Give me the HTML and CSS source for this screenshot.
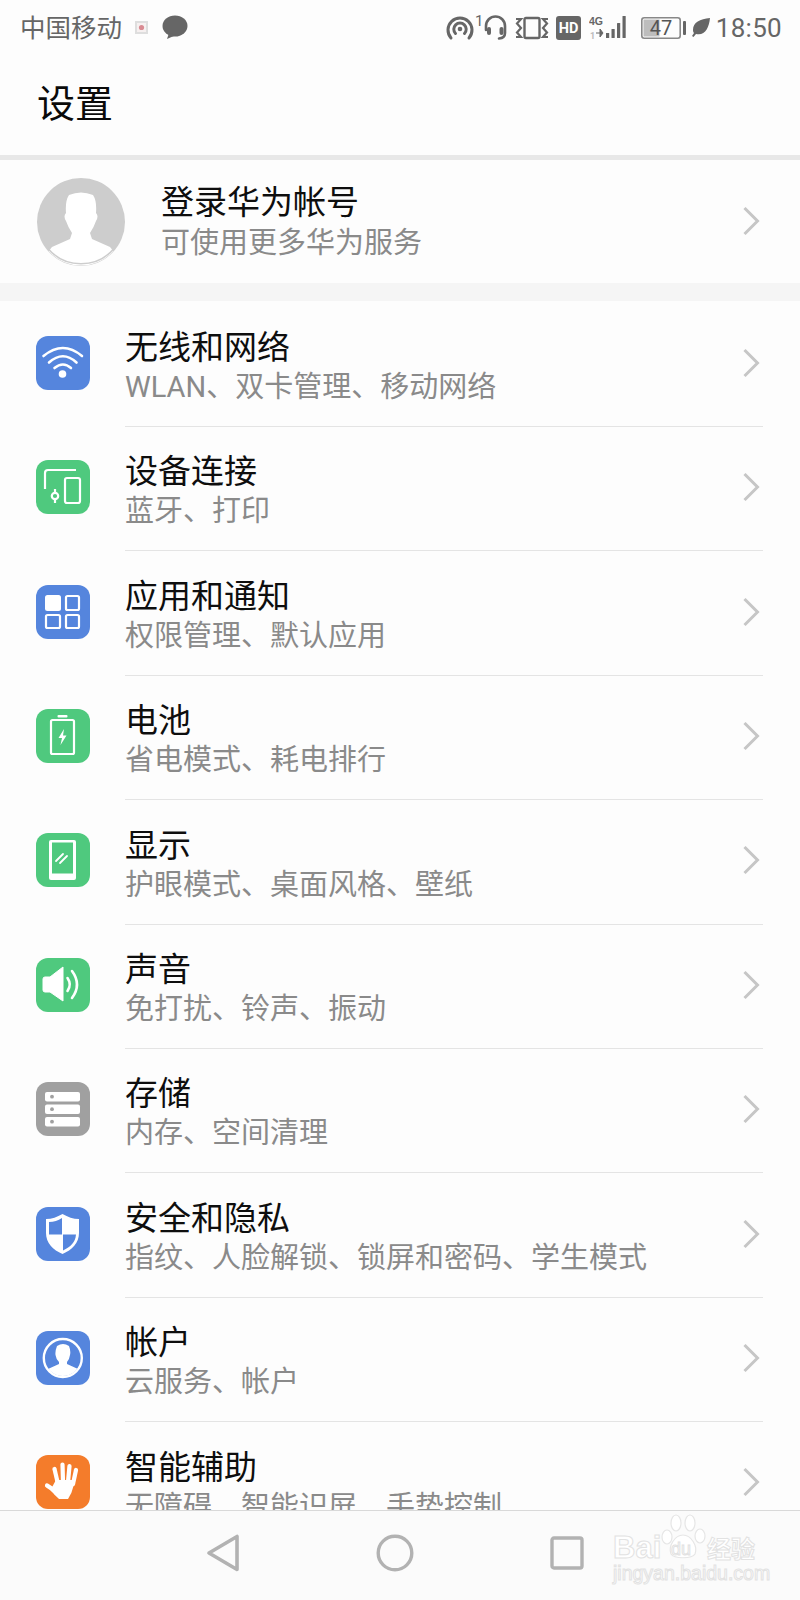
FILE: index.html
```html
<!DOCTYPE html>
<html lang="zh-CN">
<head>
<meta charset="utf-8">
<title>设置</title>
<link rel="stylesheet" href="styles.css">
</head>
<body>
<div class="phone">
  <div class="status">
    <div class="status-left">
      <span class="carrier">中国移动</span>
      <svg class="s-thumb" width="13" height="13" viewBox="0 0 13 13"><rect width="13" height="13" fill="#dedede"/><rect x="2" y="2" width="9" height="9" fill="#f6f0f0"/><circle cx="6.5" cy="6.5" r="2.6" fill="#d98a92"/></svg>
      <svg class="s-bubble" width="26" height="25" viewBox="0 0 26 25"><ellipse cx="13" cy="11" rx="12.5" ry="10.5" fill="#666"/><path d="M7 18 L5 24 L14 20 Z" fill="#666"/></svg>
    </div>
    <div class="status-right">
      <svg width="37" height="26" viewBox="0 0 37 26"><g fill="none" stroke="#666" stroke-width="3" stroke-linecap="round"><path d="M5 23 A12 12 0 1 1 23 23"/><path d="M9.500 18.500 A6.200 6.200 0 1 1 18.500 18.500"/></g><circle cx="14" cy="14" r="2.300" fill="#666"/><text x="29" y="11" class="s-one">1</text></svg>
      <svg class="s-head" width="23" height="25" viewBox="0 0 23 25"><g fill="none" stroke="#666" stroke-width="2.600" stroke-linecap="round"><path d="M2 15 V11 A9.500 9.500 0 0 1 21 11 V18 Q21 23 15 23.500"/></g><rect x="3" y="12" width="4" height="8" rx="2" fill="#666"/><rect x="15.500" y="12" width="4" height="8" rx="2" fill="#666"/></svg>
      <svg class="s-vib" width="34" height="24" viewBox="0 0 34 24"><rect x="9.500" y="2" width="15" height="20" rx="1.500" fill="none" stroke="#666" stroke-width="2.400"/><g fill="none" stroke="#666" stroke-width="2.200"><path d="M1 3 L6 3 L2 7.500 L6 12 L2 16.500 L6 21 L1 21"/><path d="M33 3 L28 3 L32 7.500 L28 12 L32 16.500 L28 21 L33 21"/></g></svg>
      <svg class="s-hd" width="25" height="24" viewBox="0 0 25 24"><rect width="25" height="24" rx="3" fill="#666"/><text x="12.500" y="17" class="s-hdt">HD</text></svg>
      <svg class="s-sig" width="41" height="25" viewBox="0 0 41 25"><text x="0" y="10" class="s-4g">4G</text><text x="1" y="23.500" class="s-sim">1</text><path d="M7 18 H11 M11 14 L14 18 L11 22 Z" stroke="#666" stroke-width="1" fill="#666"/><rect x="17" y="18" width="3.200" height="5" fill="#666"/><rect x="22.500" y="14" width="3.200" height="9" rx=".6" fill="#666"/><rect x="28" y="8" width="3.200" height="15" rx=".6" fill="#666"/><rect x="33.500" y="1" width="3.200" height="22" rx=".6" fill="#666"/></svg>
      <svg class="s-bat" width="45" height="22" viewBox="0 0 45 22"><rect x=".8" y=".8" width="38.400" height="20.400" rx="2.500" fill="#fdfdfd" stroke="#888" stroke-width="1.600"/><rect x="2.500" y="2.500" width="16" height="17" fill="#bdbdbd"/><rect x="42" y="4" width="3" height="14" rx="1" fill="#666"/><text x="20" y="18" class="s-batt">47</text></svg>
      <svg class="s-leaf" width="18" height="19" viewBox="0 0 18 19"><path d="M18 0 C8 1 1 4 1 12 C1 13.500 1.500 14.500 2 15 L0 18 L1.500 19 L4 16 C13 18 17 10 18 0 Z" fill="#666"/></svg>
      <span class="time">18:50</span>
    </div>
  </div>

  <header class="title-bar"><h1 class="title">设置</h1></header>

  <section class="profile">
    <svg class="avatar" width="90" height="90" viewBox="0 0 90 90">
      <defs><clipPath id="av"><circle cx="45" cy="45" r="43.500"/></clipPath></defs>
      <circle cx="45" cy="45" r="44" fill="#cdcdcd"/>
      <path clip-path="url(#av)" d="M33 18 Q45 13 57 18 Q61 24 60 36 Q63 39 60 44 Q58 50 54 56 L56 62 L74 70 L90 90 H0 L16 70 L34 62 L36 56 Q32 50 30 44 Q27 39 30 36 Q29 24 33 18 Z" fill="#fff"/>
      <path d="M11.500 71 A43.500 43.500 0 0 0 78.500 71" fill="none" stroke="#cdcdcd" stroke-width="1.500"/>
    </svg>
    <div class="profile-text">
      <div class="row-title">登录华为帐号</div>
      <div class="row-sub">可使用更多华为服务</div>
    </div>
    <svg class="chev" width="18" height="30" viewBox="0 0 18 30"><path d="M2.500 2 L15.500 15 L2.500 28" fill="none" stroke="#c6c6c6" stroke-width="3"/></svg>
  </section>

  <main class="list">
    <div class="row">
      <svg class="ico" width="54" height="54" viewBox="0 0 54 54"><rect width="54" height="54" rx="12" fill="#5585dd"/><g fill="none" stroke="#fff" stroke-width="2.600" stroke-linecap="round"><path d="M7.500 20 Q27 4 46 20"/><path d="M13 26.500 Q27 14 40.500 26.500"/><path d="M18.500 32 Q27 25 35 32"/></g><circle cx="26.500" cy="38" r="3.800" fill="#fff"/></svg>
      <div class="body"><div class="text"><div class="row-title">无线和网络</div><div class="row-sub">WLAN、双卡管理、移动网络</div></div><svg class="chev" width="18" height="30" viewBox="0 0 18 30"><path d="M2.500 2 L15.500 15 L2.500 28" fill="none" stroke="#c6c6c6" stroke-width="3"/></svg></div>
    </div>
    <div class="row">
      <svg class="ico" width="54" height="54" viewBox="0 0 54 54"><rect width="54" height="54" rx="12" fill="#4fc97e"/><g fill="none" stroke="#fff" stroke-width="2.200"><path d="M9 29 V13 A3 3 0 0 1 12 10 H40"/><rect x="29" y="18" width="15" height="25" rx="2"/><circle cx="19" cy="36" r="3.200"/><path d="M19 29 V32.500 M19 39.500 V43"/></g></svg>
      <div class="body"><div class="text"><div class="row-title">设备连接</div><div class="row-sub">蓝牙、打印</div></div><svg class="chev" width="18" height="30" viewBox="0 0 18 30"><path d="M2.500 2 L15.500 15 L2.500 28" fill="none" stroke="#c6c6c6" stroke-width="3"/></svg></div>
    </div>
    <div class="row">
      <svg class="ico" width="54" height="54" viewBox="0 0 54 54"><rect width="54" height="54" rx="12" fill="#5585dd"/><rect x="9" y="10" width="16" height="16" rx="2.500" fill="#fff"/><g fill="none" stroke="#fff" stroke-width="2.200"><rect x="30" y="11" width="13" height="14" rx="1.500"/><rect x="10" y="30" width="14" height="13" rx="1.500"/><rect x="30" y="30" width="13" height="13" rx="1.500"/></g></svg>
      <div class="body"><div class="text"><div class="row-title">应用和通知</div><div class="row-sub">权限管理、默认应用</div></div><svg class="chev" width="18" height="30" viewBox="0 0 18 30"><path d="M2.500 2 L15.500 15 L2.500 28" fill="none" stroke="#c6c6c6" stroke-width="3"/></svg></div>
    </div>
    <div class="row">
      <svg class="ico" width="54" height="54" viewBox="0 0 54 54"><rect width="54" height="54" rx="12" fill="#4fc97e"/><rect x="21.500" y="6" width="10" height="2.400" rx="1" fill="#fff"/><rect x="15" y="11" width="23" height="34" rx="1.500" fill="none" stroke="#fff" stroke-width="2.200"/><path d="M28 20 L22.500 29 H26 L24.500 36 L30.500 26.500 H27 Z" fill="#fff"/></svg>
      <div class="body"><div class="text"><div class="row-title">电池</div><div class="row-sub">省电模式、耗电排行</div></div><svg class="chev" width="18" height="30" viewBox="0 0 18 30"><path d="M2.500 2 L15.500 15 L2.500 28" fill="none" stroke="#c6c6c6" stroke-width="3"/></svg></div>
    </div>
    <div class="row">
      <svg class="ico" width="54" height="54" viewBox="0 0 54 54"><rect width="54" height="54" rx="12" fill="#4fc97e"/><rect x="13" y="7" width="27" height="40" rx="2" fill="#fff"/><rect x="16" y="9.500" width="21" height="31" fill="#4fc97e"/><path d="M20 28 L27 21 M24 30 L31 23" stroke="#fff" stroke-width="1.800" stroke-linecap="round"/></svg>
      <div class="body"><div class="text"><div class="row-title">显示</div><div class="row-sub">护眼模式、桌面风格、壁纸</div></div><svg class="chev" width="18" height="30" viewBox="0 0 18 30"><path d="M2.500 2 L15.500 15 L2.500 28" fill="none" stroke="#c6c6c6" stroke-width="3"/></svg></div>
    </div>
    <div class="row">
      <svg class="ico" width="54" height="54" viewBox="0 0 54 54"><rect width="54" height="54" rx="12" fill="#4fc97e"/><path d="M7 21 Q7 19 9 19 H14 L27 9 V43 L14 34 H9 Q7 34 7 32 Z" fill="#fff" stroke="#fff" stroke-linejoin="round"/><g fill="none" stroke="#fff" stroke-width="2.600" stroke-linecap="round"><path d="M31.500 20 Q36 26.500 31.500 33"/><path d="M36 13 Q46 26.500 36 40"/></g></svg>
      <div class="body"><div class="text"><div class="row-title">声音</div><div class="row-sub">免打扰、铃声、振动</div></div><svg class="chev" width="18" height="30" viewBox="0 0 18 30"><path d="M2.500 2 L15.500 15 L2.500 28" fill="none" stroke="#c6c6c6" stroke-width="3"/></svg></div>
    </div>
    <div class="row">
      <svg class="ico" width="54" height="54" viewBox="0 0 54 54"><rect width="54" height="54" rx="12" fill="#a0a0a0"/><g fill="#fff"><rect x="9" y="10" width="35" height="9.500" rx="2"/><rect x="9" y="22.500" width="35" height="9.500" rx="2"/><rect x="9" y="35" width="35" height="9.500" rx="2"/></g><g fill="#a0a0a0"><circle cx="16" cy="14.700" r="1.900"/><circle cx="16" cy="27.200" r="1.900"/><circle cx="16" cy="39.700" r="1.900"/></g></svg>
      <div class="body"><div class="text"><div class="row-title">存储</div><div class="row-sub">内存、空间清理</div></div><svg class="chev" width="18" height="30" viewBox="0 0 18 30"><path d="M2.500 2 L15.500 15 L2.500 28" fill="none" stroke="#c6c6c6" stroke-width="3"/></svg></div>
    </div>
    <div class="row">
      <svg class="ico" width="54" height="54" viewBox="0 0 54 54"><rect width="54" height="54" rx="12" fill="#5585dd"/><path d="M26.500 7 C32 10 37 12 43 12 V26 C43 36 36 43 26.500 47 C17 43 10 36 10 26 V12 C16 12 21 10 26.500 7 Z" fill="#fff"/><path d="M26 11 V27.500 H13 V15 C18 15 22 13.500 26 11 Z" fill="#5585dd"/><path d="M27 27.500 H40 C39.500 35 34.500 40 27 43.500 Z" fill="#5585dd"/></svg>
      <div class="body"><div class="text"><div class="row-title">安全和隐私</div><div class="row-sub">指纹、人脸解锁、锁屏和密码、学生模式</div></div><svg class="chev" width="18" height="30" viewBox="0 0 18 30"><path d="M2.500 2 L15.500 15 L2.500 28" fill="none" stroke="#c6c6c6" stroke-width="3"/></svg></div>
    </div>
    <div class="row">
      <svg class="ico" width="54" height="54" viewBox="0 0 54 54"><defs><clipPath id="acc"><circle cx="26.800" cy="27" r="18"/></clipPath></defs><rect width="54" height="54" rx="12" fill="#5585dd"/><circle cx="26.800" cy="27" r="19" fill="none" stroke="#fff" stroke-width="2.400"/><path clip-path="url(#acc)" d="M21 15 Q27 11 33 15 Q35 20 34 24 Q33.500 28 31 31 V33 L42 38 L46 50 H8 L12 38 L23 33 V31 Q20 28 19.500 24 Q19 20 21 15 Z" fill="#fff"/></svg>
      <div class="body"><div class="text"><div class="row-title">帐户</div><div class="row-sub">云服务、帐户</div></div><svg class="chev" width="18" height="30" viewBox="0 0 18 30"><path d="M2.500 2 L15.500 15 L2.500 28" fill="none" stroke="#c6c6c6" stroke-width="3"/></svg></div>
    </div>
    <div class="row">
      <svg class="ico" width="54" height="54" viewBox="0 0 54 54"><rect width="54" height="54" rx="12" fill="#f47c2b"/><g fill="none" stroke="#fff" stroke-width="4.200" stroke-linecap="round"><path d="M18.500 14 L22 29"/><path d="M26.500 9.500 L27 27"/><path d="M33.500 11 L32 27"/><path d="M40 15 L37 29"/><path d="M11 30.500 Q16 33 20 38"/></g><path d="M20 25 H37 L37.500 31 Q36 38 32 44 H23 Q18 40 15 34 Z" fill="#fff"/></svg>
      <div class="body"><div class="text"><div class="row-title">智能辅助</div><div class="row-sub">无障碍、智能识屏、手势控制</div></div><svg class="chev" width="18" height="30" viewBox="0 0 18 30"><path d="M2.500 2 L15.500 15 L2.500 28" fill="none" stroke="#c6c6c6" stroke-width="3"/></svg></div>
    </div>
  </main>

  <nav class="nav">
    <svg width="34" height="38" viewBox="0 0 34 38"><path d="M31 2.500 V35.500 L3 19 Z" fill="none" stroke="#b2b2b2" stroke-width="3.600" stroke-linejoin="round"/></svg>
    <svg width="38" height="38" viewBox="0 0 38 38"><circle cx="19" cy="19" r="16.800" fill="none" stroke="#b2b2b2" stroke-width="3.400"/></svg>
    <svg width="34" height="34" viewBox="0 0 34 34"><rect x="2" y="2" width="30" height="30" rx="2" fill="none" stroke="#b2b2b2" stroke-width="3.400"/></svg>
  </nav>

  <div class="mark">
    <svg class="mark-paw" width="46" height="46" viewBox="0 0 46 46"><g fill="#fff" stroke="#e6e6e6" stroke-width="1.200"><ellipse cx="6" cy="23" rx="5" ry="7"/><ellipse cx="15" cy="9" rx="5" ry="8"/><ellipse cx="29" cy="9" rx="5" ry="8"/><ellipse cx="39" cy="22" rx="5" ry="7"/><path d="M22 21 C30 21 37 32 34 40 C31 45 13 45 10 40 C7 32 14 21 22 21 Z"/></g></svg>
    <span class="mark-bai">Bai</span>
    <span class="mark-du">du</span>
    <span class="mark-jy">经验</span>
    <span class="mark-url">jingyan.baidu.com</span>
  </div>
</div>
</body>
</html>
```
FILE: styles.css
```css
* { box-sizing: border-box; }
html, body { margin: 0; padding: 0; }
body {
  font-family: Roboto, "Noto Sans CJK SC", sans-serif;
  background: #fdfdfd;
}
.phone {
  position: relative;
  width: 800px;
  height: 1600px;
  display: flex;
  flex-direction: column;
  overflow: hidden;
  background: #fdfdfd;
}

/* status bar */
.status {
  flex: none;
  height: 55px;
  display: flex;
  justify-content: space-between;
  align-items: center;
  padding: 0 18px 0 20px;
  color: #666;
}
.status-left, .status-right { display: flex; align-items: center; }
.carrier { font-size: 25.500px; line-height: 30px; }
.s-thumb { margin-left: 13px; }
.s-bubble { margin-left: 14px; }
.status-right svg { flex: none; }
.s-head { margin-left: 1px; }
.s-vib { margin-left: 8px; }
.s-hd { margin-left: 7px; }
.s-sig { margin-left: 8px; }
.s-bat { margin-left: 11px; }
.s-leaf { margin-left: 6px; }
.time { margin-left: 6px; font-size: 26px; line-height: 30px; letter-spacing: .3px; }
.s-one { font: 15px Roboto, sans-serif; fill: #666; }
.s-hdt { font: bold 14.500px Roboto, sans-serif; fill: #fff; text-anchor: middle; }
.s-4g { font: bold 10.500px "Liberation Sans Narrow", "Liberation Sans", sans-serif; fill: #666; }
.s-sim { font: bold 9px Roboto, sans-serif; fill: #bbb; }
.s-batt { font: 20px Roboto, sans-serif; fill: #555; text-anchor: middle; }

/* title */
.title-bar {
  flex: none;
  height: 100px;
  padding-left: 37px;
  display: flex;
  align-items: center;
  border-bottom: 5px solid #e8e8e8;
  height: 105px;
}
.title { margin: 0 0 3px; font-size: 38px; font-weight: 400; line-height: 50px; color: #0a0a0a; }

/* profile */
.profile {
  flex: none;
  height: 123px;
  padding: 0 37px 0 36px;
  display: flex;
  align-items: center;
  border-bottom: 18px solid #f5f5f5;
  height: 141px;
}
.avatar { flex: none; margin-top: 1px; }
.profile-text { flex: 1; margin-left: 35px; padding-top: 4px; }
.profile .row-sub { line-height: 42px; }
.profile .chev { margin-top: 2px; }

/* list */
.list { flex: 1; min-height: 0; overflow: hidden; padding-top: 1.600px; }
.row {
  height: 124.400px;
  display: flex;
  align-items: center;
  padding-left: 36px;
}
.ico { flex: none; margin-top: -4px; }
.body {
  flex: 1;
  height: 100%;
  margin: 0 37px 0 35px;
  display: flex;
  align-items: center;
  border-bottom: 1px solid #e4e4e4;
}
.text { flex: 1; padding-top: 7.400px; }
.row-title { font-size: 33px; line-height: 38px; color: #0e0e0e; }
.row-sub { font-size: 29px; line-height: 40px; color: #8a8a8a; white-space: nowrap; }
.chev { flex: none; margin-right: 3px; margin-bottom: 3px; }

/* bottom nav */
.nav {
  flex: none;
  height: 90px;
  border-top: 1px solid #d9d9d9;
  background: #fbfbfb;
  display: flex;
  align-items: center;
  padding: 0 216px 6px 206px;
  justify-content: space-between;
}

/* watermark */
.mark {
  position: absolute;
  left: 610px;
  top: 1512px;
  width: 160px;
  height: 72px;
  color: #fff;
  font-family: "Liberation Sans", sans-serif;
  -webkit-text-stroke: 1px #e2e2e2;
}
.mark span { position: absolute; white-space: nowrap; }
.mark-paw { position: absolute; left: 51px; top: 2px; }
.mark-bai { left: 3px; top: 18px; font-size: 31px; line-height: 36px; font-weight: bold; }
.mark-du { left: 61px; top: 27px; font-size: 18px; line-height: 20px; }
.mark-jy { left: 97px; top: 21px; font-size: 24px; line-height: 30px; font-weight: bold; font-family: "Noto Sans CJK SC", sans-serif; }
.mark-url { left: 3px; top: 49px; font-size: 19.500px; line-height: 24px; }
```
